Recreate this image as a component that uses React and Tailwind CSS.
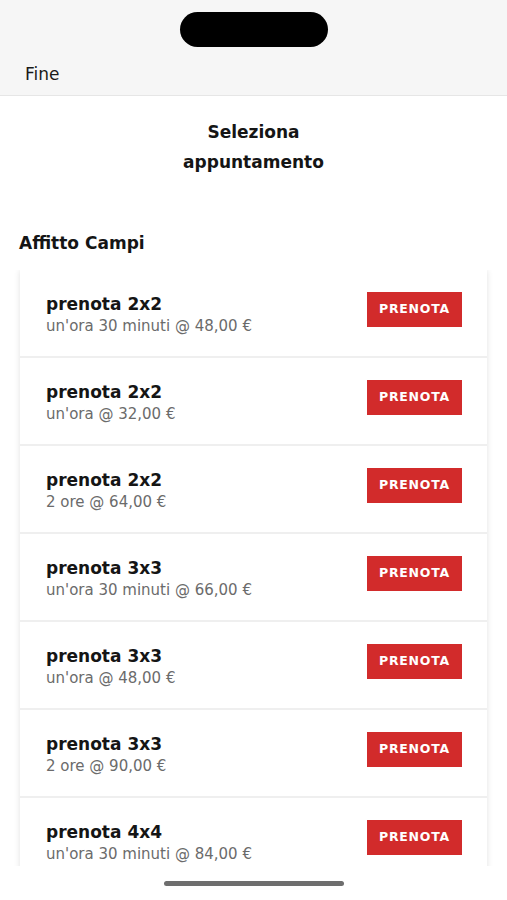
const slots = [
  { name: "prenota 2x2", info: "un'ora 30 minuti @ 48,00 €" },
  { name: "prenota 2x2", info: "un'ora @ 32,00 €" },
  { name: "prenota 2x2", info: "2 ore @ 64,00 €" },
  { name: "prenota 3x3", info: "un'ora 30 minuti @ 66,00 €" },
  { name: "prenota 3x3", info: "un'ora @ 48,00 €" },
  { name: "prenota 3x3", info: "2 ore @ 90,00 €" },
  { name: "prenota 4x4", info: "un'ora 30 minuti @ 84,00 €" },
]

const SlotRow = ({ slot }) => (
  <div className="flex items-start justify-between bg-white h-[86px] pl-[26px] pr-[25px]">
    <div className="flex flex-col pt-[23px]">
      <span className="text-[17px] leading-[22px] font-semibold text-[#151515]">{slot.name}</span>
      <span className="text-[15px] leading-[22px] text-[#6b6b6b]">{slot.info}</span>
    </div>
    <button className="mt-[22px] w-[95px] h-[35px] bg-[#d22b2b] text-white text-[12.5px] font-semibold tracking-[0.06em]">
      PRENOTA
    </button>
  </div>
)

export default function App() {
  return (
    <div className="w-[507px] h-[900px] bg-white flex flex-col overflow-hidden font-['DejaVu_Sans','Open_Sans',sans-serif]">
      {/* header */}
      <div className="h-[96px] bg-[#f6f6f6] border-b border-[#e6e6e6] flex flex-col items-center pt-[12px] shrink-0">
        <div className="w-[148px] h-[35px] rounded-full bg-black"></div>
        <div className="self-start pl-[25px] mt-[16px] text-[17px] leading-[22px] text-[#1a1a1a]">Fine</div>
      </div>

      <div className="flex-1 flex flex-col min-h-0">
        <h1 className="text-center text-[17px] leading-[30px] font-semibold text-[#151515] mt-[21px]">
          Seleziona<br />appuntamento
        </h1>

        <h2 className="text-[17px] leading-[22px] font-semibold text-[#151515] pl-[19px] mt-[55px]">Affitto Campi</h2>

        <div className="flex-1 min-h-0 overflow-hidden mt-[16px] px-[20px]">
          <div className="flex flex-col gap-[2px] bg-[#efefef] shadow-[0_0_6px_rgba(0,0,0,0.12)]">
            {slots.map((slot, i) => <SlotRow key={i} slot={slot} />)}
          </div>
        </div>

        <div className="h-[34px] shrink-0 bg-white flex justify-center items-center">
          <div className="w-[180px] h-[5px] rounded-full bg-[#6e6e6e]"></div>
        </div>
      </div>
    </div>
  )
}
